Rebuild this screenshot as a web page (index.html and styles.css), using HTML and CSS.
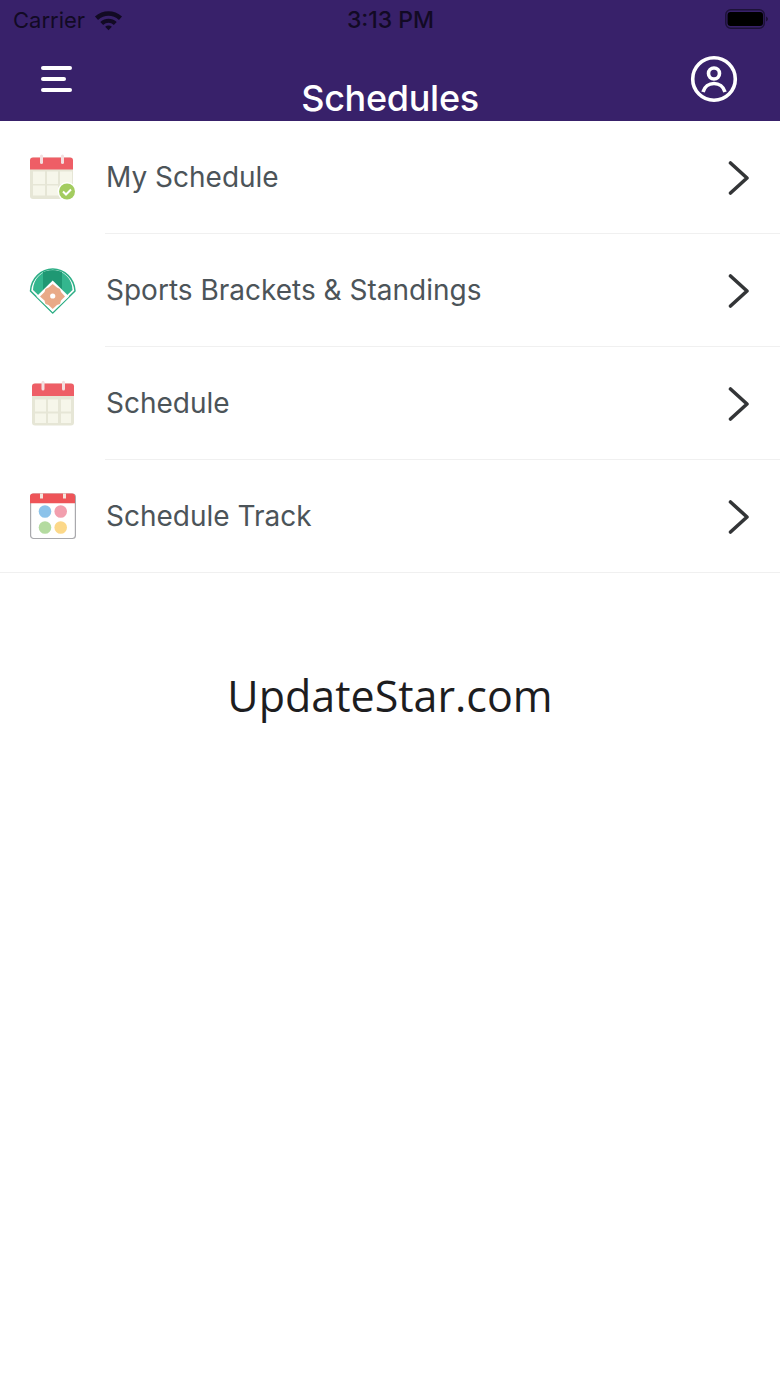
FILE: index.html
```html
<!DOCTYPE html>
<html lang="en">
<head>
  <meta charset="UTF-8">
  <meta name="viewport" content="width=device-width, initial-scale=1.0">
  <title>Schedules</title>
  <link rel="stylesheet" href="styles.css">
</head>
<body>
  <header class="header">
    <div class="status-bar">
      <div class="status-left">
        <span>Carrier</span>
        <svg class="wifi" width="29" height="22" viewBox="0 0 30 22">
          <path d="M1 7.500C9 0 21 0 29 7.500L25.800 11C19.500 5.200 10.500 5.200 4.200 11Z" fill="#120a24"/>
          <path d="M6.500 13C11.500 8.500 18.500 8.500 23.500 13L20.500 16.200C17 13.200 13 13.200 9.500 16.200Z" fill="#120a24"/>
          <path d="M11.500 18C13.500 16.300 16.500 16.300 18.500 18L15 21.500Z" fill="#120a24"/>
        </svg>
      </div>
      <span class="status-time">3:13 PM</span>
      <div class="status-right">
        <svg width="43" height="20" viewBox="0 0 43 20">
          <rect x="0.800" y="0.800" width="38.500" height="18.400" rx="5" fill="none" stroke="#1d1238" stroke-width="1.500"/>
          <rect x="2.500" y="3" width="35.500" height="14" rx="3" fill="#000"/>
          <path d="M41 7.500C42 8 43 9 43 10S42 12 41 12.500Z" fill="#1d1238"/>
        </svg>
      </div>
    </div>
    <nav class="nav-bar">
      <div class="menu-icon">
        <span class="menu-line"></span>
        <span class="menu-line short"></span>
        <span class="menu-line"></span>
      </div>
      <h1 class="title">Schedules</h1>
      <svg class="profile-icon" width="48" height="48" viewBox="0 0 48 48" fill="none" stroke="#fff" stroke-width="3.600">
        <circle cx="24" cy="24" r="21.300"/>
        <circle cx="24" cy="18.500" r="5.500"/>
        <path d="M13 37C14.500 31.500 19 28.500 24 28.500S33.500 31.500 35 37"/>
      </svg>
    </nav>
  </header>

  <ul class="list">
    <li class="row">
      <svg class="row-icon" width="50" height="50" viewBox="0 0 50 50">
        <rect x="2" y="4.500" width="43" height="41.500" rx="3" fill="#e6e6d6"/>
        <path d="M2 16.500V7.500a3 3 0 0 1 3-3h37a3 3 0 0 1 3 3v9Z" fill="#ee5e66"/>
        <rect x="12" y="1.500" width="3" height="9.500" rx="1.500" fill="#f3dfe0"/>
        <rect x="33" y="1.500" width="3" height="9.500" rx="1.500" fill="#f3dfe0"/>
        <path d="M5 18.500h12V31H5ZM19 18.500h11V31H19ZM32 18.500h12V31H32ZM5 32.500h12v10H5ZM19 32.500h11v10H19Z" fill="#f6f6ea"/>
        <circle cx="39" cy="38.500" r="9.500" fill="#fff"/>
        <circle cx="39" cy="38.500" r="8" fill="#a3cc5f"/>
        <path d="M35 38.500l3 3 5-5" fill="none" stroke="#fff" stroke-width="2"/>
      </svg>
      <span class="row-label">My Schedule</span>
      <svg class="chevron" width="22" height="34" viewBox="0 0 22 34"><path d="M2.500 2L19 17 2.500 32" fill="none" stroke="#333537" stroke-width="3.600" stroke-linecap="round" stroke-linejoin="round"/></svg>
    </li>
    <li class="row">
      <svg class="row-icon" width="50" height="50" viewBox="0 0 50 50">
        <path d="M24.700 47L2.500 25A22.300 23.500 0 0 1 47 25Z" fill="#fff" stroke="#2cae85" stroke-width="1.500" stroke-linejoin="round"/>
        <path d="M24.700 43L5 24A19.700 19.700 0 0 1 44.500 24Z" fill="#34b68e"/>
        <path d="M15 6C21 3.800 28.500 3.800 34 6V26L24.700 17 15 26Z" fill="#1f9873"/>
        <path d="M24.700 14.500L41 30.500 24.700 46 8.500 30.500Z" fill="#fff"/>
        <path d="M24.700 18L29 21.500 32 23 33 26 37 30.500 33 34.500 32 38 29 39 24.700 43 20.500 39 17.500 38 16.500 34.500 12 30.500 16.500 26 17.500 23 20.500 21.500Z" fill="#e9aa88"/>
        <circle cx="24.700" cy="30" r="2.600" fill="#fff"/>
      </svg>
      <span class="row-label">Sports Brackets &amp; Standings</span>
      <svg class="chevron" width="22" height="34" viewBox="0 0 22 34"><path d="M2.500 2L19 17 2.500 32" fill="none" stroke="#333537" stroke-width="3.600" stroke-linecap="round" stroke-linejoin="round"/></svg>
    </li>
    <li class="row">
      <svg class="row-icon" width="50" height="50" viewBox="0 0 50 50">
        <rect x="4" y="4.500" width="42" height="42" rx="3" fill="#e6e6d6"/>
        <path d="M4 17V7.500a3 3 0 0 1 3-3h36a3 3 0 0 1 3 3V17Z" fill="#ee5e66"/>
        <rect x="13.500" y="1.800" width="3" height="9.700" rx="1.500" fill="#f3dfe0"/>
        <rect x="34" y="1.800" width="3" height="9.700" rx="1.500" fill="#f3dfe0"/>
        <path d="M7 20.500h11v12H7ZM20 20.500h10v12H20ZM33 20.500h10v12H33ZM7 34.500h11V44H7ZM20 34.500h10V44H20ZM33 34.500h10V44H33Z" fill="#f6f6ea"/>
      </svg>
      <span class="row-label">Schedule</span>
      <svg class="chevron" width="22" height="34" viewBox="0 0 22 34"><path d="M2.500 2L19 17 2.500 32" fill="none" stroke="#333537" stroke-width="3.600" stroke-linecap="round" stroke-linejoin="round"/></svg>
    </li>
    <li class="row row-last">
      <svg class="row-icon" width="50" height="50" viewBox="0 0 50 50">
        <rect x="2.600" y="2" width="44.800" height="44.500" rx="3" fill="#fff" stroke="#a9a9ad" stroke-width="1.200"/>
        <path d="M2 11.200V4.500a3 3 0 0 1 3-3h39a3 3 0 0 1 3 3v6.700Z" fill="#ee5458"/>
        <rect x="12" y="1.500" width="3" height="5" fill="#f4e4dc"/>
        <rect x="35" y="1.500" width="3" height="5" fill="#f4e4dc"/>
        <circle cx="17" cy="19.500" r="6.300" fill="#8cc3ea"/>
        <circle cx="32.700" cy="19.500" r="6.300" fill="#f29fae"/>
        <circle cx="17" cy="35.500" r="6.300" fill="#b4dba0"/>
        <circle cx="32.700" cy="35.500" r="6.300" fill="#fcd889"/>
      </svg>
      <span class="row-label">Schedule Track</span>
      <svg class="chevron" width="22" height="34" viewBox="0 0 22 34"><path d="M2.500 2L19 17 2.500 32" fill="none" stroke="#333537" stroke-width="3.600" stroke-linecap="round" stroke-linejoin="round"/></svg>
    </li>
  </ul>

  <p class="watermark">UpdateStar.com</p>
</body>
</html>
```

FILE: styles.css
```css
body {
  font-family: Inter, "Liberation Sans", sans-serif;
  background-color: white;
  margin: 0;
}

.header {
  background-color: #38216a;
  height: 121px;
  box-sizing: border-box;
}

.status-bar {
  display: grid;
  grid-template-columns: 1fr auto 1fr;
  align-items: center;
  height: 40px;
  padding: 0 12px 0 13px;
  color: #120a24;
  font-size: 22px;
}

.status-left {
  display: flex;
  align-items: center;
  gap: 9px;
}

.status-time {
  font-size: 23px;
  font-weight: 500;
}

.status-right {
  display: flex;
  justify-content: flex-end;
  margin-top: -2px;
}

.nav-bar {
  display: grid;
  grid-template-columns: 1fr auto 1fr;
  height: 81px;
  padding: 0 42px;
}

.menu-icon {
  display: flex;
  flex-direction: column;
  gap: 7px;
  margin: 26px 0 0 -1px;
}

.menu-line {
  display: block;
  width: 31px;
  height: 4px;
  border-radius: 2px;
  background-color: white;
}

.menu-line.short {
  width: 25px;
}

.title {
  margin: 37px 0 0;
  font-size: 36px;
  line-height: 43px;
  font-weight: 500;
  letter-spacing: -0.3px;
  color: white;
}

.profile-icon {
  justify-self: end;
  margin-top: 15px;
}

.list {
  list-style: none;
  margin: 0;
  padding: 0;
}

.row {
  position: relative;
  display: flex;
  align-items: center;
  height: 113px;
  padding: 0 30px 0 28px;
}

.row::after {
  content: "";
  position: absolute;
  left: 105px;
  right: 0;
  bottom: 0;
  height: 1px;
  background-color: #f0f0f0;
}

.row-last::after {
  left: 0;
}

.row-icon {
  flex: none;
}

.row-label {
  flex: 1;
  margin: 0 0 2px 28px;
  font-size: 28px;
  color: #4c5459;
}

.watermark {
  margin: 93px 0 0;
  text-align: center;
  font-family: "Open Sans", sans-serif;
  font-size: 43px;
  line-height: 60px;
  color: #1d1d1f;
}
```
